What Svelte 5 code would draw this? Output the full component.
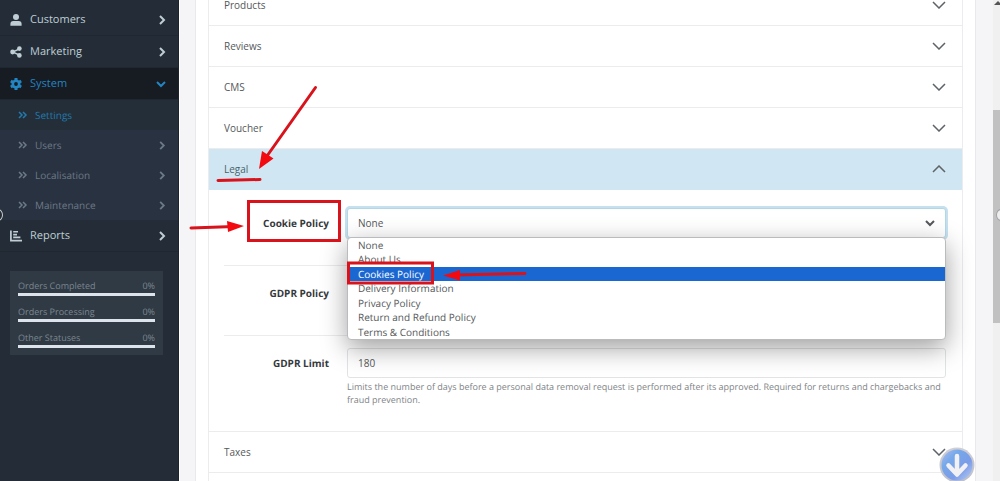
<script>
  const chevron = 'M2 1 L6 5 L2 9';
  const subItems = [
    { label: 'Settings', active: true },
    { label: 'Users' },
    { label: 'Localisation' },
    { label: 'Maintenance' }
  ];
  const stats = [
    { label: 'Orders Completed', value: 0 },
    { label: 'Orders Processing', value: 0 },
    { label: 'Other Statuses', value: 0 }
  ];
  const sections = ['Products', 'Reviews', 'CMS', 'Voucher'];
  const options = [
    'None',
    'About Us',
    'Cookies Policy',
    'Delivery Information',
    'Privacy Policy',
    'Return and Refund Policy',
    'Terms & Conditions'
  ];
  let highlighted = $state('Cookies Policy');
</script>

{#snippet next()}
  <svg class="next" viewBox="0 0 8 10"><path d={chevron} /></svg>
{/snippet}

{#snippet section(title, open)}
  <button class="section" class:open aria-expanded={open}>
    <span>{title}</span>
    <svg class="fold" viewBox="0 0 14 8"><path d={open ? 'M1 7 L7 1 L13 7' : 'M1 1 L7 7 L13 1'} /></svg>
  </button>
{/snippet}

<div class="page">
  <nav class="sidebar">
    <a class="item" href="#customers">
      <svg class="icon" viewBox="0 0 12 12"><circle cx="6" cy="3" r="3" /><path d="M0.4 11.8 V10 Q0.4 7 3.4 7 H8.6 Q11.6 7 11.6 10 V11.8 Z" /></svg>
      <span>Customers</span>{@render next()}
    </a>
    <a class="item" href="#marketing">
      <svg class="icon" viewBox="0 0 12 12"><path d="M9.4 2.8 L2.8 6 L9.4 9.2" fill="none" stroke="currentColor" stroke-width="1.5" /><circle cx="2.6" cy="6" r="2.4" /><circle cx="9.4" cy="2.6" r="2.3" /><circle cx="9.4" cy="9.4" r="2.3" /></svg>
      <span>Marketing</span>{@render next()}
    </a>
    <a class="item current" href="#system">
      <svg class="icon" viewBox="0 0 12 12"><g stroke="currentColor" stroke-width="3"><path d="M6 0 V12 M0.8 3 L11.2 9 M0.8 9 L11.2 3" /></g><circle cx="6" cy="6" r="4.5" /><circle class="hole" cx="6" cy="6" r="1.9" /></svg>
      <span>System</span>
      <svg class="down" viewBox="0 0 10 8"><path d="M1 2 L5 6 L9 2" /></svg>
    </a>
    <div class="submenu">
      {#each subItems as sub}
        <a class="sub" class:active={sub.active} href="#{sub.label.toLowerCase()}">
          <svg class="double" viewBox="0 0 10 8"><path d="M1 1 L4 4 L1 7 M5 1 L8 4 L5 7" /></svg>
          <span>{sub.label}</span>
          {#if !sub.active}{@render next()}{/if}
        </a>
      {/each}
    </div>
    <a class="item" href="#reports">
      <svg class="icon" viewBox="0 0 12 12"><path d="M0.9 0.5 V10.6 H12" fill="none" stroke="currentColor" stroke-width="1.7" /><path d="M3.2 1 H8 V2.6 H3.2 Z M3.2 3.8 H7 V5.4 H3.2 Z M3.2 6.6 H10.4 V8.3 H3.2 Z" /></svg>
      <span>Reports</span>{@render next()}
    </a>
    <div class="stats">
      {#each stats as s}
        <div class="stat">
          <span>{s.label}</span><span>{s.value}%</span>
          <div class="track"><div class="bar" style="width: {s.value}%"></div></div>
        </div>
      {/each}
    </div>
  </nav>

  <main>
    <div class="card">
      <div class="accordion">
        {#each sections as title}{@render section(title, false)}{/each}
        {@render section('Legal', true)}
        <div class="body">
          <div class="row">
            <label for="cookie">Cookie Policy</label>
            <div class="field">
              <div class="selectbox">
                <select id="cookie" class="focused"><option>None</option></select>
                <svg class="caret" viewBox="0 0 10 7"><path d="M1 1 L5 5 L9 1" /></svg>
              </div>
              <ul role="listbox" aria-label="Cookie Policy">
                {#each options as o}
                  <li role="option" aria-selected={o === highlighted} class:hot={o === highlighted} onmouseenter={() => (highlighted = o)}>{o}</li>
                {/each}
              </ul>
            </div>
          </div>
          <div class="row">
            <label for="gdpr">GDPR Policy</label>
            <div class="field"><select id="gdpr"><option>None</option></select></div>
          </div>
          <div class="row last">
            <label for="limit">GDPR Limit</label>
            <div class="field">
              <input id="limit" type="text" value="180" />
              <p>Limits the number of days before a personal data removal request is performed after its approved. Required for returns and chargebacks and fraud prevention.</p>
            </div>
          </div>
        </div>
        {@render section('Taxes', false)}
        {@render section('', false)}
      </div>
    </div>
  </main>

  <div class="scroll">
    <svg viewBox="0 0 7 6"><path d="M1 5 L5 1 L7 3 V5 Z" /></svg>
    <div class="thumb"></div>
  </div>

  <span class="handle left"></span>
  <span class="handle right"></span>

  <button class="jump" aria-label="Scroll down">
    <svg viewBox="0 0 36 36">
      <defs>
        <linearGradient id="ball" x1="0" y1="0" x2="1" y2="1"><stop offset="0" stop-color="#b3bdec" /><stop offset="0.3" stop-color="#76a8ea" /><stop offset="0.65" stop-color="#7b9ce8" /><stop offset="1" stop-color="#bccff5" /></linearGradient>
        <linearGradient id="rim" x1="0" y1="0" x2="0" y2="1"><stop offset="0" stop-color="#cfcfd6" /><stop offset="1" stop-color="#bcbfca" /></linearGradient>
      </defs>
      <circle cx="18" cy="18" r="17.5" fill="url(#rim)" />
      <circle cx="18" cy="18" r="15.5" fill="url(#ball)" />
      <path d="M18 9 V26 M9.5 18.5 L18 27.5 L26.5 18.5" fill="none" stroke="#f1f1f3" stroke-width="4.5" stroke-linecap="round" stroke-linejoin="round" />
    </svg>
  </button>

  <svg class="marks" width="1000" height="481" viewBox="0 0 1000 481" aria-hidden="true">
    <g fill="none" stroke="#d9131b" stroke-width="3" stroke-linecap="round">
      <path d="M315.5 87.5 L267 156" />
      <path d="M218 180.5 L260 179.5" />
      <path d="M191 228 L234 226.5" />
      <path d="M525 273.5 L455 275" />
      <rect x="248.5" y="201.5" width="91" height="39" />
      <rect x="348.5" y="263" width="84" height="20" />
    </g>
    <g fill="#f20a10">
      <path d="M259 169 L262 151 L273.5 158.5 Z" />
      <path d="M244 226 L227 221 L228 232 Z" />
      <path d="M443 275.5 L460 270 L460 280.5 Z" />
    </g>
  </svg>
</div>

<style>
  :global(body) { background: #f5f5f7; }
  .page {
    position: relative; display: flex; height: 100vh; overflow: hidden;
    font: 10px/16px "Open Sans", "Noto Sans", sans-serif; color: #55585a;
    text-rendering: geometricPrecision;
  }
  svg { display: block; flex: none; }
  button, input, select { font: inherit; color: inherit; margin: 0; }
  a { color: inherit; text-decoration: none; }
  .sidebar { width: 179px; flex: none; box-sizing: border-box; background: #242d37; border-right: 1px solid #1b242d; padding-top: 4px; color: #bfcdd5; }
  .item { display: flex; align-items: center; height: 31px; padding: 0 12px 0 10px; gap: 8px; border-bottom: 1px solid #1f2830; font-size: 11px; }
  .item span, .sub span { flex: 1; }
  .icon { width: 12px; height: 12px; fill: currentColor; }
  .hole { fill: #171b22; }
  .next { width: 8px; height: 10px; fill: none; stroke: currentColor; stroke-width: 2; }
  .down { width: 10px; height: 8px; fill: none; stroke: currentColor; stroke-width: 2; }
  .current { background: #171b22; color: #2385c2; }
  .submenu { background: #293240; }
  .sub { display: flex; align-items: center; height: 30px; padding: 0 12px 0 18px; gap: 7px; color: #6c7987; }
  .sub.active { background: #242e38; color: #2279ad; }
  .sub .next { height: 9px; }
  .double { width: 10px; height: 8px; fill: none; stroke: currentColor; stroke-width: 1.5; }
  .stats { margin: 19px 15px 0 10px; padding: 8px 8px 7px; background: #2f3a45; font-size: 9px; line-height: 13px; color: #7c868e; }
  .stat { display: flex; flex-wrap: wrap; justify-content: space-between; row-gap: 1px; }
  .stat + .stat { margin-top: 9px; }
  .track { flex: 0 0 100%; height: 3px; background: #dce3ea; }
  .bar { height: 3px; background: #2385c2; }
  main { flex: 1; min-width: 0; padding: 0 17px 0 15px; border-left: 1px solid #fff; }
  .card { min-height: 100vh; background: #fff; border: solid #e9e9eb; border-width: 0 1px; padding: 0 12px; box-sizing: border-box; }
  .accordion { margin-top: -15px; border: solid #ececee; border-width: 0 1px; }
  .section { display: flex; width: 100%; height: 41px; align-items: center; justify-content: space-between; padding: 0 16px 0 15px; background: #fff; border: 0; border-bottom: 1px solid #ececee; text-align: left; }
  .section.open { background: #d0e7f3; border-color: #d0e7f3; color: #4b5f6a; }
  .fold { width: 14px; height: 8px; fill: none; stroke: #5e6367; stroke-width: 1.5; }
  .body { padding: 6px 16px 0 15px; border-bottom: 1px solid #ececee; height: 235px; }
  .row { display: grid; grid-template-columns: 105px 1fr; column-gap: 18px; padding: 12px 0 27px; border-bottom: 1px solid #ececee; }
  .row.last { border: 0; }
  label { font-weight: 700; text-align: right; line-height: 30px; color: #35393c; white-space: nowrap; }
  .field { position: relative; min-width: 0; }
  .selectbox { position: relative; }
  select, input { display: block; width: 100%; height: 30px; box-sizing: border-box; padding: 0 10px; border: 1px solid #e2e3e5; border-radius: 3px; background: #fff; appearance: none; outline: 0; }
  .focused { border-color: #b4d7e8; box-shadow: 0 0 0 2px #c5e1ef; }
  .caret { position: absolute; right: 11px; top: 12px; width: 10px; height: 7px; fill: none; stroke: #55595c; stroke-width: 2; }
  input { background: transparent; }
  ul { position: absolute; z-index: 2; top: 29px; left: 0; right: 0; height: 103px; box-sizing: border-box; display: grid; grid-template-rows: repeat(7, 1fr); margin: 0; padding: 0; list-style: none; background: #fff; border: 1px solid #b9bbbd; border-radius: 4px; box-shadow: 0 8px 26px rgba(0, 0, 0, 0.38); }
  li { padding: 0 10px; line-height: 14px; }
  .hot { background: #1b67d2; color: #fff; }
  p { margin: 2px 0 0; font-size: 9px; line-height: 13px; color: #808487; }
  .scroll { width: 7px; flex: none; background: #f0f0f1; }
  .scroll svg { width: 7px; height: 6px; fill: #555; }
  .thumb { height: 213px; margin-top: 104px; background: #c1c1c1; }
  .handle { position: absolute; top: 209px; width: 8px; height: 10px; border: 1px solid #a0a3a6; border-radius: 50%; background: #eee; }
  .handle.left { left: -7px; background: #242d37; border-color: #ccc; }
  .right { right: -6px; }
  .jump { position: absolute; z-index: 3; right: 25px; bottom: -2px; width: 36px; height: 36px; padding: 0; border: 0; background: none; }
  .marks { position: absolute; z-index: 4; left: 0; top: 0; pointer-events: none; }
</style>
